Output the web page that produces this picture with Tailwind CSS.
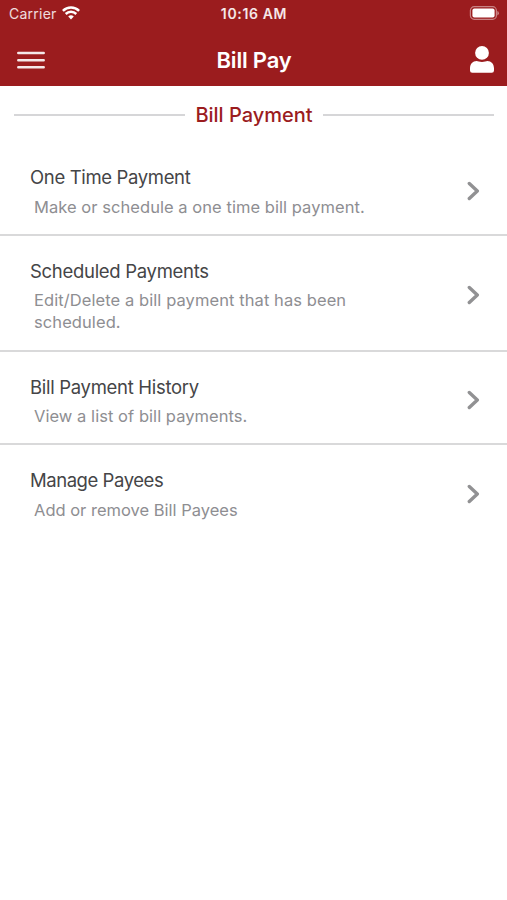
<!DOCTYPE html>
<html lang="en">
  <head>
    <meta charset="UTF-8" />
    <meta name="viewport" content="width=device-width, initial-scale=1.0" />
    <title>Bill Pay</title>
    <script src="https://cdn.jsdelivr.net/npm/@tailwindcss/browser@4"></script>
  </head>
  <body class="bg-white min-h-screen font-['Inter',sans-serif]">
    <header class="bg-[#9b1c1e] text-white h-[86px]">
      <!-- Status bar -->
      <div class="grid grid-cols-3 items-center h-7 pl-[9px] pr-[8px] text-[14px]">
        <div class="flex items-center gap-[5px] pb-[2px] text-white/85">
          <span class="tracking-[0.25px]">Carrier</span>
          <svg class="w-[18px] h-[14px] text-white" viewBox="0 0 18 14" fill="none" stroke="currentColor" stroke-width="2.5">
            <path d="M0.9 4.9a11.6 11.6 0 0 1 16.2 0" />
            <path d="M3.7 8a7.6 7.6 0 0 1 10.6 0" />
            <path d="M9 13.6l-2.8-3a4.1 4.1 0 0 1 5.6 0z" fill="currentColor" stroke="none" />
          </svg>
        </div>
        <span class="text-center font-semibold text-white/90 tracking-[0.65px] text-[14px] pb-[1px]">10:16 AM</span>
        <svg class="w-[31px] h-[14px] justify-self-end mb-[2px]" viewBox="0 0 31 14">
          <rect x="2.4" y="0.7" width="26" height="12.6" rx="3.8" fill="none" stroke="white" stroke-opacity="0.45" stroke-width="1.2" />
          <rect x="4.4" y="2.4" width="22.2" height="9.2" rx="2" fill="white" />
          <path d="M29.4 5v4.4a2.4 2.4 0 0 0 0-4.4z" fill="white" fill-opacity="0.5" />
        </svg>
      </div>

      <!-- Nav bar -->
      <div class="grid grid-cols-3 items-center h-[58px] pl-[17px] pr-[13px]">
        <div class="pt-[6px]">
          <svg class="w-[28px] h-[18px]" viewBox="0 0 28 18" stroke="white" stroke-opacity="0.9" stroke-width="2.5" stroke-linecap="round">
            <path d="M1.3 2h25.4M1.3 9.2h25.4M1.3 16.3h25.4" />
          </svg>
        </div>
        <h1 class="text-center text-[22px] font-semibold pt-[6px] pr-[3px] tracking-[-0.2px]">Bill Pay</h1>
        <svg class="w-[24px] h-[27px] justify-self-end mt-[5px]" viewBox="0 0 24 27" fill="white">
          <circle cx="12" cy="6.9" r="6.9" />
          <path d="M0 22.2C0 18 2.8 15 6.6 15c1.4 0 2.8 1 5.4 1s4-1 5.4-1c3.8 0 6.6 3 6.6 7.2v2.3a2.3 2.3 0 0 1-2.3 2.3H2.3A2.3 2.3 0 0 1 0 24.5z" />
        </svg>
      </div>
    </header>

    <main>
      <div class="flex items-center gap-[10px] h-[57px] pl-[14px] pr-[13px]">
        <span class="flex-1 h-[2px] bg-[#d6d6d8]"></span>
        <h2 class="text-[20px] font-medium text-[#9b1c1e]">Bill Payment</h2>
        <span class="flex-1 h-[2px] bg-[#d6d6d8]"></span>
      </div>

      <ul>
        <li class="flex items-center justify-between h-[93px] pl-[30px] pr-[27px] border-b-2 border-[#d9d9da]">
          <div class="pt-[4px]">
            <h3 class="text-[18.5px] leading-[26px] tracking-[-0.35px] text-[#454547]">One Time Payment</h3>
            <p class="mt-[6px] pl-[4px] text-[16.5px] leading-[22px] tracking-[0.05px] text-[#8e8e92]">Make or schedule a one time bill payment.</p>
          </div>
          <svg class="w-[13px] h-[20px] mt-[5px]" viewBox="0 0 13 20" fill="none" stroke="#919193" stroke-width="3.4" stroke-linecap="round" stroke-linejoin="round"><path d="M2.3 2.5l8 7.5-8 7.5" /></svg>
        </li>
        <li class="flex items-center justify-between h-[116px] pl-[30px] pr-[27px] border-b-2 border-[#d9d9da]">
          <div class="pt-[4px]">
            <h3 class="text-[18.5px] leading-[26px] tracking-[-0.3px] text-[#454547]">Scheduled Payments</h3>
            <p class="mt-[5px] pl-[4px] w-[350px] text-[16.5px] leading-[22px] tracking-[0.08px] text-[#8e8e92]">Edit/Delete a bill payment that has been scheduled.</p>
          </div>
          <svg class="w-[13px] h-[20px] mt-[4px]" viewBox="0 0 13 20" fill="none" stroke="#919193" stroke-width="3.4" stroke-linecap="round" stroke-linejoin="round"><path d="M2.3 2.5l8 7.5-8 7.5" /></svg>
        </li>
        <li class="flex items-center justify-between h-[93px] pl-[30px] pr-[27px] border-b-2 border-[#d9d9da]">
          <div class="pt-[5px]">
            <h3 class="text-[18.5px] leading-[26px] tracking-[-0.3px] text-[#454547]">Bill Payment History</h3>
            <p class="mt-[5px] pl-[4px] text-[16.5px] leading-[22px] tracking-[0.05px] text-[#8e8e92]">View a list of bill payments.</p>
          </div>
          <svg class="w-[13px] h-[20px] mt-[5px]" viewBox="0 0 13 20" fill="none" stroke="#919193" stroke-width="3.4" stroke-linecap="round" stroke-linejoin="round"><path d="M2.3 2.5l8 7.5-8 7.5" /></svg>
        </li>
        <li class="flex items-center justify-between h-[93px] pl-[30px] pr-[27px]">
          <div class="pt-[4px]">
            <h3 class="text-[18.5px] leading-[26px] tracking-[-0.45px] text-[#454547]">Manage Payees</h3>
            <p class="mt-[6px] pl-[4px] text-[16.5px] leading-[22px] text-[#8e8e92]">Add or remove Bill Payees</p>
          </div>
          <svg class="w-[13px] h-[20px] mt-[5px]" viewBox="0 0 13 20" fill="none" stroke="#919193" stroke-width="3.4" stroke-linecap="round" stroke-linejoin="round"><path d="M2.3 2.5l8 7.5-8 7.5" /></svg>
        </li>
      </ul>
    </main>
  </body>
</html>
